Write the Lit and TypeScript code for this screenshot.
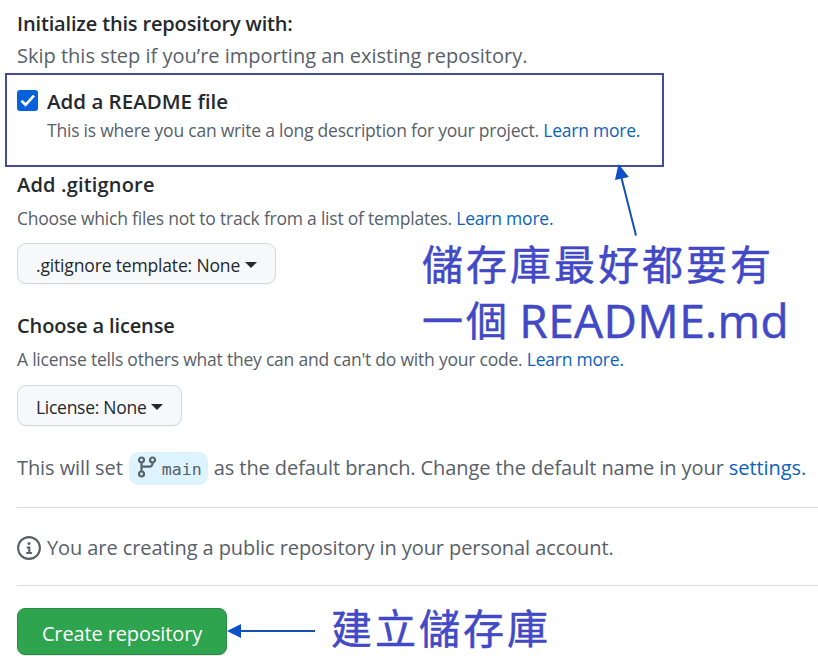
import { LitElement, html, css, svg } from "lit";
import { customElement, property } from "lit/decorators.js";

@customElement("select-button")
class SelectButton extends LitElement {
  @property() label = "";

  static styles = css`
    :host { display: block; }
    .btn {
      box-sizing: border-box; height: 41px; display: inline-flex; align-items: center;
      padding: 2px 18px 0; border: 1px solid #d5d8da; border-radius: 9px;
      background: #f6f8fa; box-shadow: 0 1px 0 rgba(27, 31, 35, 0.04);
      color: #24292e; font: inherit; letter-spacing: inherit; white-space: nowrap;
    }
    .caret { width: 12px; height: 6px; margin: 0 0 0 5px; fill: #24292e; }
  `;

  render() {
    return html`<button class="btn">${this.label}<svg class="caret" viewBox="0 0 12 6"><path d="M0 0h12L6 6z"/></svg></button>`;
  }
}

@customElement("app-root")
class AppRoot extends LitElement {
  static styles = css`
    :host {
      display: block; position: relative; width: 818px; height: 670px; overflow: hidden;
      background: #fff; color: #586069;
      font-family: "Open Sans", "Noto Sans", sans-serif; font-size: 20px;
    }
    .page { padding: 7px 0 0 17px; }
    .line { display: flex; align-items: center; white-space: pre; }
    .title { height: 32px; font-weight: 600; color: #24292e; font-size: 20px; }
    .lead { height: 32px; }
    .small { font-size: 17.5px; letter-spacing: -0.22px; height: 28px; }
    .link { color: #0b62bd; }
    .t-init { letter-spacing: -0.16px; }
    .t-ignore { letter-spacing: 0.18px; }
    .t-license { letter-spacing: -0.12px; }
    .readme {
      box-sizing: border-box; width: 659px; height: 94px; margin: 2px 0 0 -12px;
      padding: 10px 10px 0; border: 2px solid #454c9f; display: grid;
      grid-template-columns: 21px 1fr; column-gap: 9px; align-content: start;
    }
    .readme .small { grid-column: 2; height: 25px; }
    .readme .t-readme { font-size: 20.5px; }
    .check { width: 21px; height: 21px; margin-top: 5px; border-radius: 3px; background: #0561dc; }
    .section { height: 141px; box-sizing: border-box; padding-top: 1px; }
    .section .small { height: 36px; }
    .picker { font-size: 17.5px; letter-spacing: -0.16px; margin-top: 7px; }
    .p-license { margin-top: 8px; letter-spacing: -0.28px; }
    .branch-row { height: 34px; margin-top: 2px; }
    .branch {
      box-sizing: border-box; display: inline-flex; width: 79px; height: 33px; margin: 0 6px;
      padding: 4px 0 0 8px; border-radius: 9px; background: #ddf4ff;
      font: 16.6px "DejaVu Sans Mono", monospace;
    }
    .branch svg { width: 20px; height: 22px; margin-right: 5px; }
    .branch span { line-height: 27px; }
    .w-set, .w-default { letter-spacing: -0.08px; padding-bottom: 2px; }
    .rule { height: 1px; background: #d9dcdf; }
    .rule.first { margin-top: 22px; }
    .info { height: 77px; gap: 6px; padding-top: 2px; box-sizing: border-box; }
    .w-info { letter-spacing: -0.085px; }
    .info svg { width: 24px; height: 24px; }
    .create {
      box-sizing: border-box; display: flex; align-items: center; justify-content: center;
      width: 210px; height: 47px; margin-top: 22px; padding: 4px 0 0; border: 1px solid #2b8a45;
      border-radius: 8px; background: #2ea44f; color: #fff; font: inherit; white-space: nowrap;
      letter-spacing: -0.12px; box-shadow: 0 1px 0 rgba(27, 31, 35, 0.1);
    }
    .arrows { position: absolute; left: 0; top: 0; width: 818px; height: 670px; pointer-events: none; }
    .note {
      position: absolute; color: #4149c6; white-space: pre; font-weight: 400;
      font-family: "Open Sans", "Noto Sans CJK TC", sans-serif; font-size: 41px; line-height: 56px;
    }
    .cjk {
      font-family: "Noto Sans CJK TC", sans-serif; letter-spacing: 3px;
      -webkit-text-stroke: 0.5px #4149c6;
    }
    .note-readme { left: 422px; top: 234px; }
    .note-create { left: 331px; top: 598px; }
    .latin {
      font-size: 46px; line-height: 20px; vertical-align: -2px; margin-left: -3px;
      letter-spacing: 0.4px; -webkit-text-stroke: 0.5px #4149c6;
    }
  `;

  render() {
    return html`
      <main class="page">
        <div class="line title t-init"><span>Initialize this repository with:</span></div>
        <div class="line lead"><span>Skip this step if you’re importing an existing repository.</span></div>
        <section class="readme">
          <svg class="check" viewBox="0 0 21 21"><path d="M4.5 10.8l4 4L17 5.7" fill="none" stroke="#fff" stroke-width="2.7"/></svg>
          <div class="line title t-readme"><span>Add a README file</span></div>
          <div class="line small"><span>This is where you can write a long description for your project. <a class="link">Learn more.</a></span></div>
        </section>
        <section class="section">
          <div class="line title t-ignore"><span>Add .gitignore</span></div>
          <div class="line small"><span>Choose which files not to track from a list of templates. <a class="link">Learn more.</a></span></div>
          <select-button class="picker" label=".gitignore template: None"></select-button>
        </section>
        <section class="section">
          <div class="line title t-license"><span>Choose a license</span></div>
          <div class="line small"><span>A license tells others what they can and can't do with your code. <a class="link">Learn more.</a></span></div>
          <select-button class="picker p-license" label="License: None"></select-button>
        </section>
        <div class="line branch-row"><span class="w-set">This will set</span><span class="branch"><svg viewBox="0 0 20 22" fill="none" stroke="#586069" stroke-width="2.2"><circle cx="4.5" cy="4" r="2.5"/><circle cx="15.5" cy="4" r="2.5"/><circle cx="4.5" cy="18" r="2.5"/><path d="M4.5 6.5v9M15.5 6.5v1.2a3 3 0 0 1-3 3h-8"/></svg><span>main</span></span><span class="w-default">as the default branch. Change the default name in your <a class="link">settings.</a></span></div>
        <div class="rule first"></div>
        <div class="line info"><svg viewBox="0 0 24 24" fill="none" stroke="#586069" stroke-width="2.1"><circle cx="12" cy="12" r="10.9"/><path d="M9.7 11.5h2.6v5.3M9.3 17h5.6"/><circle cx="12" cy="7.5" r="1.5" fill="#586069" stroke="none"/></svg><span class="w-info">You are creating a public repository in your personal account.</span></div>
        <div class="rule"></div>
        <button class="create">Create repository</button>
      </main>
      <svg class="arrows" viewBox="0 0 818 670" fill="#0b50c8" stroke="#1551b5" stroke-width="2">
        ${svg`<path d="M636 235.5L621 176M315 631H240"/><path stroke="none" d="M618.5 164l10.3 13-13.8 3zM227 631l14-7v14z"/>`}
      </svg>
      <div class="note note-readme"><div class="cjk">儲存庫最好都要有</div><div><span class="cjk">一個</span><span class="latin"> README.md</span></div></div>
      <div class="note note-create cjk">建立儲存庫</div>
    `;
  }
}
